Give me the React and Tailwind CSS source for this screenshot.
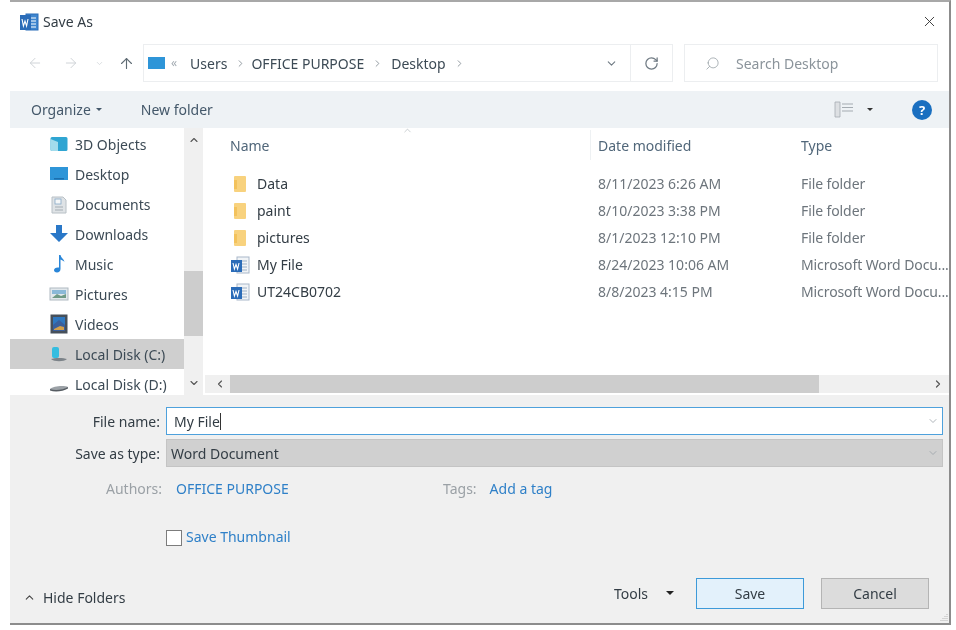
import React from 'react';
import { ArrowLeft, ArrowRight, ArrowUp, ChevronDown, ChevronUp, ChevronLeft, ChevronRight, RotateCw, Search, X } from 'lucide-react';

// Small drawn icons for the Explorer shell
const WordIcon = ({ title = false }) => (
  <svg width="20" height="20" viewBox="0 0 20 20">
    <rect x="7" y="2" width="12" height="16" fill={title ? '#3f86cf' : '#f1f4f7'} stroke={title ? '#2b6cb8' : '#a9b8c9'} strokeWidth="1" />
    <path d="M12 6h5M12 9h5M12 12h5M12 15h5" stroke={title ? '#ffffff' : '#9db0c5'} strokeWidth="1.2" />
    <rect x="1" y={title ? 3 : 5} width="11" height={title ? 15 : 12} fill="#2b6cb8" />
    <path d={title ? 'M3 7l1.400 7 1.600-5 1.600 5L9 7' : 'M3 8l1.400 6 1.600-4.500 1.600 4.500L9 8'} fill="none" stroke="#fff" strokeWidth="1.1" />
  </svg>
);

const FolderIcon = () => (
  <svg width="14" height="18" viewBox="0 0 14 18">
    <rect x="1" y="1" width="12" height="16" rx="1" fill="#f8d27e" />
    <rect x="1" y="5" width="3" height="9" fill="#f3c25c" />
  </svg>
);

const NavIcon = ({ kind }) => {
  if (kind === '3d') {
    return (
      <svg width="20" height="20" viewBox="0 0 20 20">
        <path d="M3 3h14a1.500 1.500 0 0 1 1.500 1.500v11A1.500 1.500 0 0 1 17 17H3a1.500 1.500 0 0 1-1.500-1.500v-11A1.500 1.500 0 0 1 3 3z" fill="#2fa5d2" />
        <path d="M1.500 5L9 8v9H3a1.500 1.500 0 0 1-1.500-1.500z" fill="#a3dcec" />
      </svg>
    );
  }
  if (kind === 'desktop') {
    return (
      <svg width="20" height="20" viewBox="0 0 20 20">
        <rect x="1" y="3" width="18" height="13" fill="#2e95d8" />
        <rect x="5" y="14" width="10" height="1.500" fill="#1b6fae" />
      </svg>
    );
  }
  if (kind === 'docs') {
    return (
      <svg width="20" height="20" viewBox="0 0 20 20">
        <path d="M3 3h11l3 3v13H3z" fill="#dfe3e6" stroke="#b8c0c6" />
        <rect x="6" y="5" width="6" height="5" fill="#f5f7f8" stroke="#86a9c6" strokeWidth="0.8" />
        <path d="M6 13h8M6 16h8" stroke="#a4adb4" />
      </svg>
    );
  }
  if (kind === 'downloads') {
    return (
      <svg width="20" height="20" viewBox="0 0 20 20">
        <path d="M7 1h6v8h6l-9 9-9-9h6z" fill="#2a78c8" />
      </svg>
    );
  }
  if (kind === 'music') {
    return (
      <svg width="20" height="20" viewBox="0 0 20 20">
        <path d="M10 1h1.500c.5 3 3.500 4 4 7-1.500-1.500-2.500-2-4-2.500V15c0 2-1.500 3.500-3.500 3.500S5 17.500 5 16s2-3 5-2.500z" fill="#2a86d8" />
      </svg>
    );
  }
  if (kind === 'pictures') {
    return (
      <svg width="20" height="20" viewBox="0 0 20 20">
        <rect x="1" y="4" width="18" height="12" fill="#e2e8ec" stroke="#b0bac1" />
        <rect x="3" y="6" width="14" height="4" fill="#8bb9d8" />
        <path d="M3 14l5-4 4 2 5-2v4z" fill="#6f9a86" />
      </svg>
    );
  }
  if (kind === 'videos') {
    return (
      <svg width="20" height="20" viewBox="0 0 20 20">
        <rect x="1.500" y="0.500" width="17" height="19" fill="#47505a" />
        <rect x="4" y="3" width="12" height="14" fill="#2f78c0" />
        <path d="M4 11l6-5 6 5v6H4z" fill="#3a5f9c" />
        <path d="M5 15l6-3 4 1v3H5z" fill="#d4a04a" />
      </svg>
    );
  }
  if (kind === 'diskc') {
    return (
      <svg width="20" height="20" viewBox="0 0 20 20">
        <path d="M2 15c3-1.500 13-1.500 16 0-3 3-13 3-16 0z" fill="#7c8389" />
        <rect x="3" y="3" width="7" height="11" rx="2" fill="#35bde0" />
      </svg>
    );
  }
  return (
    <svg width="20" height="20" viewBox="0 0 20 20">
      <path d="M1 15c3-3 14-4 18-2-2 3-14 5-18 2z" fill="#9ba1a6" />
      <path d="M1 15c5 2 13 1 18-2v1.500c-5 3-13 4-18 2z" fill="#565c62" />
    </svg>
  );
};

const navItems = [
  { kind: '3d', label: '3D Objects' },
  { kind: 'desktop', label: 'Desktop' },
  { kind: 'docs', label: 'Documents' },
  { kind: 'downloads', label: 'Downloads' },
  { kind: 'music', label: 'Music' },
  { kind: 'pictures', label: 'Pictures' },
  { kind: 'videos', label: 'Videos' },
  { kind: 'diskc', label: 'Local Disk (C:)', active: true },
  { kind: 'diskd', label: 'Local Disk (D:)' },
];

const files = [
  { name: 'Data', date: '8/11/2023 6:26 AM', type: 'File folder', folder: true },
  { name: 'paint', date: '8/10/2023 3:38 PM', type: 'File folder', folder: true },
  { name: 'pictures', date: '8/1/2023 12:10 PM', type: 'File folder', folder: true },
  { name: 'My File', date: '8/24/2023 10:06 AM', type: 'Microsoft Word Docu...' },
  { name: 'UT24CB0702', date: '8/8/2023 4:15 PM', type: 'Microsoft Word Docu...' },
];

export default function App() {
  return (
    <div className="w-[956px] h-[630px] bg-white overflow-hidden text-[14px] text-[#3c4a55] blur-[0.5px]" style={{ fontFamily: '"Noto Sans", sans-serif' }}>
      <div className="ml-[10px] w-[941px] h-[625px] bg-white border-t-2 border-r-2 border-b-2 border-t-[#a8a8a8] border-r-[#8c8c8c] border-b-[#8c8c8c] flex flex-col">
        {/* Title bar */}
        <div className="h-[39px] shrink-0 flex items-center pl-[9px] pr-[11px]">
          <WordIcon title />
          <span className="ml-[4px] text-[#333d45]">Save As</span>
          <X size={17} strokeWidth={1.3} className="ml-auto text-[#333]" />
        </div>

        {/* Address bar */}
        <div className="mt-[3px] h-[38px] shrink-0 flex items-stretch">
          <div className="w-[133px] flex items-center text-[#d0d4d8] pl-[17px]">
            <ArrowLeft size={16} strokeWidth={1.5} />
            <ArrowRight size={16} strokeWidth={1.5} className="ml-[20px]" />
            <ChevronDown size={9} strokeWidth={2} className="ml-[16px]" />
            <ArrowUp size={17} strokeWidth={1.6} className="ml-[14px] text-[#5f6b74]" />
          </div>
          <div className="w-[530px] flex items-center border border-[#eceef0] pl-[4px]">
            <span className="w-[17px] h-[12px] bg-[#2e95d8]"></span>
            <span className="ml-[6px] text-[#a3abb2] text-[12px]">«</span>
            <span className="ml-[13px]">Users</span>
            <ChevronRight size={11} strokeWidth={2} className="ml-[8px] text-[#8a939a]" />
            <span className="ml-[5px]">OFFICE PURPOSE</span>
            <ChevronRight size={11} strokeWidth={2} className="ml-[8px] text-[#8a939a]" />
            <span className="ml-[8px]">Desktop</span>
            <ChevronRight size={11} strokeWidth={2} className="ml-[8px] text-[#8a939a]" />
            <ChevronDown size={13} strokeWidth={2} className="ml-auto mr-[12px] text-[#6f7a83]" />
            <div className="h-full w-[42px] border-l border-[#eceef0] flex items-center justify-center">
              <RotateCw size={15} strokeWidth={2} className="text-[#6f7a83]" />
            </div>
          </div>
          <div className="ml-[11px] w-[254px] flex items-center border border-[#eceef0] pl-[20px]">
            <Search size={15} strokeWidth={1.3} className="-scale-x-100 text-[#9aa2a8]" />
            <span className="ml-[16px] text-[#8b949b]">Search Desktop</span>
          </div>
        </div>

        {/* Toolbar */}
        <div className="mt-[9px] h-[37px] shrink-0 bg-[#eef2f5] flex items-center pl-[21px] pr-[17px] text-[#44586a]">
          <span>Organize</span>
          <span className="ml-[5px] border-x-[3px] border-t-[3px] border-x-transparent border-t-[#44586a]"></span>
          <span className="ml-[39px]">New folder</span>
          <svg width="20" height="17" viewBox="0 0 20 17" className="ml-auto">
            <path d="M1 1h5v15H1z" fill="#dde0e3" stroke="#a4abb1" strokeWidth="0.8" />
            <path d="M8 3h11M8 6.500h11M8 10h11" stroke="#a4abb1" />
          </svg>
          <span className="ml-[13px] border-x-[3px] border-t-[3px] border-x-transparent border-t-[#333]"></span>
          <span className="ml-[39px] w-[20px] h-[20px] rounded-full bg-[#1a6fc0] text-white font-bold text-[13px] leading-[20px] text-center">?</span>
        </div>

        {/* Body */}
        <div className="h-[267px] shrink-0 flex">
          <div className="w-[174px] pt-[1px]">
            {navItems.map((item) => (
              <div key={item.label} className={`h-[30px] flex items-center pl-[39px] whitespace-nowrap ${item.active ? 'bg-[#cfcfcf]' : ''}`}>
                <NavIcon kind={item.kind} />
                <span className="ml-[6px]">{item.label}</span>
              </div>
            ))}
          </div>
          <div className="w-[19px] bg-[#f0f0f0] flex flex-col items-center text-[#555]">
            <div className="h-[24px] flex items-center"><ChevronUp size={12} strokeWidth={2.2} /></div>
            <div className="mt-[119px] w-full h-[65px] bg-[#cdcdcd]"></div>
            <div className="mt-auto mb-[3px] h-[18px] flex items-center"><ChevronDown size={12} strokeWidth={2.2} /></div>
          </div>
          <div className="flex-1 min-w-0 flex flex-col ml-[2px]">
            <div className="flex-1 min-h-0">
              <div className="relative h-[35px] flex items-center text-[#51677a]">
                <ChevronUp size={11} strokeWidth={1.2} className="absolute left-[197px] top-[-3px] text-[#a0a8ae]" />
                <span className="w-[393px] shrink-0 pl-[25px]">Name</span>
                <span className="w-[203px] shrink-0">Date modified</span>
                <span>Type</span>
                <span className="absolute left-[385px] top-[2px] h-[30px] w-px bg-[#eef1f3]"></span>
              </div>
              <div className="pt-[7px]">
                {files.map((file) => (
                  <div key={file.name} className="h-[27px] flex items-center whitespace-nowrap">
                    <div className="w-[393px] shrink-0 flex items-center pl-[25px]">
                      <span className="w-[20px] flex justify-center">{file.folder ? <FolderIcon /> : <WordIcon />}</span>
                      <span className="ml-[7px] text-[#333d45]">{file.name}</span>
                    </div>
                    <span className="w-[203px] shrink-0 text-[#6d757c]">{file.date}</span>
                    <span className="tracking-[-0.1px] text-[#6d757c]">{file.type}</span>
                  </div>
                ))}
              </div>
            </div>
            <div className="h-[18px] mb-[2px] shrink-0 bg-[#f0f0f0] flex items-center text-[#555]">
              <ChevronLeft size={12} strokeWidth={2.2} className="ml-[9px]" />
              <div className="ml-[4px] w-[589px] h-full bg-[#cdcdcd]"></div>
              <ChevronRight size={12} strokeWidth={2.4} className="ml-auto mr-[5px]" />
            </div>
          </div>
        </div>

        {/* Save form */}
        <div className="relative flex-1 min-h-0 bg-[#f0f0f0] pt-[12px] pr-[6px]">
          <div className="flex items-center h-[28px]">
            <span className="w-[150px] text-right text-[#333d45]">File name:</span>
            <div className="ml-[6px] flex-1 h-full bg-white border border-[#4ea1dc] flex items-center pl-[7px] text-[#333d45]">
              <span>My File</span>
              <span className="w-px h-[17px] bg-[#333]"></span>
              <ChevronDown size={12} strokeWidth={1.6} className="ml-auto mr-[3px] text-[#9aa2a8]" />
            </div>
          </div>
          <div className="mt-[4px] flex items-center h-[28px]">
            <span className="w-[150px] text-right text-[#333d45]">Save as type:</span>
            <div className="ml-[6px] flex-1 h-full bg-[#d0d0d0] border border-[#c4c4c4] flex items-center pl-[4px] text-[#333d45]">
              <span>Word Document</span>
              <ChevronDown size={12} strokeWidth={1.6} className="ml-auto mr-[3px] text-[#9aa2a8]" />
            </div>
          </div>
          <div className="mt-[8px] h-[26px] flex items-center">
            <span className="w-[152px] text-right text-[#9ba1a6]">Authors:</span>
            <span className="ml-[14px] w-[267px] text-[#2f80c8]">OFFICE PURPOSE</span>
            <span className="text-[#9ba1a6]">Tags:</span>
            <span className="ml-[13px] text-[#2f80c8]">Add a tag</span>
          </div>
          <div className="mt-[29px] flex items-center pl-[156px]">
            <span className="w-[16px] h-[16px] bg-white border border-[#7c7c7c]"></span>
            <span className="ml-[4px] text-[#2f80c8] leading-[16px] -mt-[2px]">Save Thumbnail</span>
          </div>
          <div className="mt-[32px] h-[30px] flex items-center pl-[13px] pr-[14px]">
            <ChevronUp size={13} strokeWidth={2} className="mt-[8px] text-[#444]" />
            <span className="ml-[7px] mt-[8px] text-[#333d45]">Hide Folders</span>
            <span className="ml-auto text-[#333d45]">Tools</span>
            <span className="ml-[18px] border-x-[4px] border-t-[4px] border-x-transparent border-t-[#222]"></span>
            <div className="ml-[22px] w-[108px] h-[31px] bg-[#e3f1fb] border border-[#3d9ad9] flex items-center justify-center text-[#333d45]">Save</div>
            <div className="ml-[17px] w-[108px] h-[31px] bg-[#dcdcdc] border border-[#b4b4b4] flex items-center justify-center text-[#333d45]">Cancel</div>
          </div>
          <svg width="9" height="9" viewBox="0 0 9 9" className="absolute right-[1px] bottom-[1px]">
            <path d="M8 1v1M6 3v1M8 3v1M4 5v1M6 5v1M8 5v1M2 7v1M4 7v1M6 7v1M8 7v1" stroke="#b5b5b5" />
          </svg>
        </div>
      </div>
    </div>
  );
}
